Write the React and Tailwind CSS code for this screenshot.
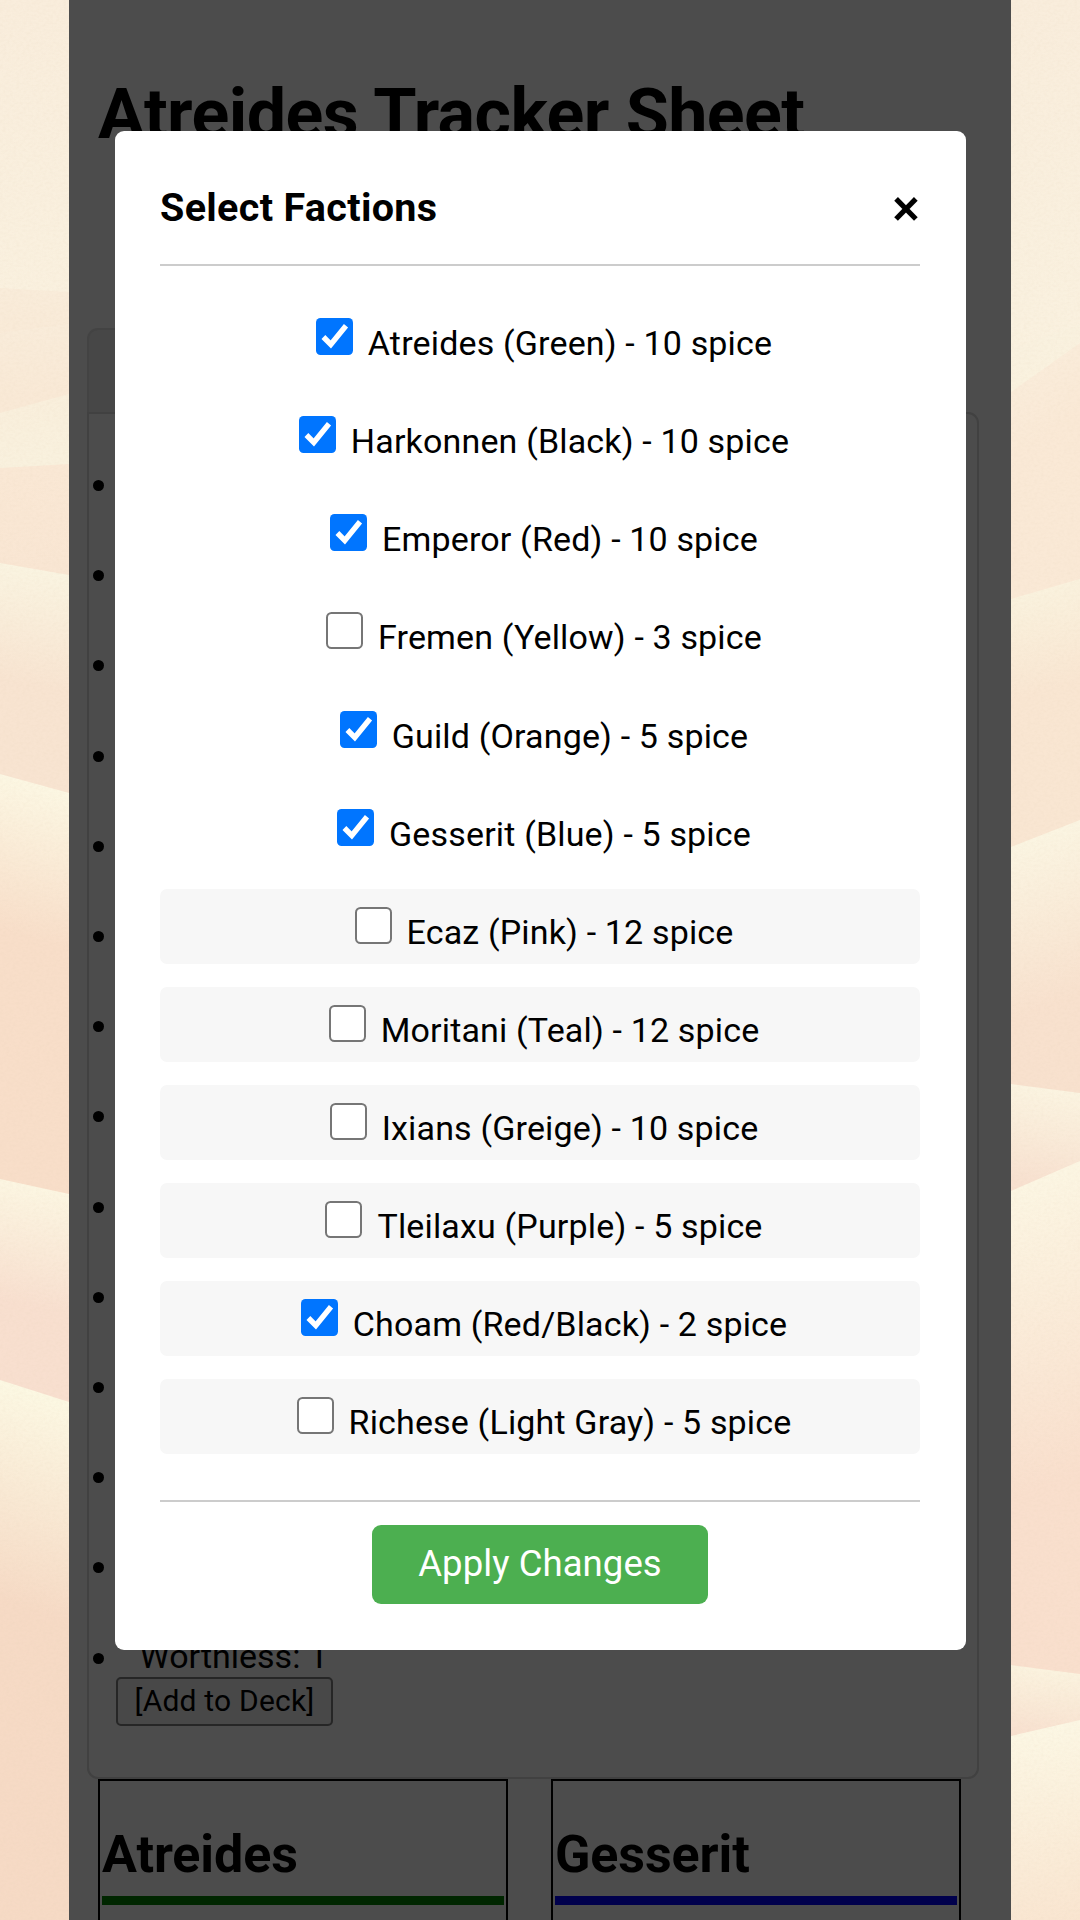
const factions = [
  { label: "Atreides (Green) - 10 spice", checked: true },
  { label: "Harkonnen (Black) - 10 spice", checked: true },
  { label: "Emperor (Red) - 10 spice", checked: true },
  { label: "Fremen (Yellow) - 3 spice" },
  { label: "Guild (Orange) - 5 spice", checked: true },
  { label: "Gesserit (Blue) - 5 spice", checked: true },
  { label: "Ecaz (Pink) - 12 spice", expansion: true },
  { label: "Moritani (Teal) - 12 spice", expansion: true },
  { label: "Ixians (Greige) - 10 spice", expansion: true },
  { label: "Tleilaxu (Purple) - 5 spice", expansion: true },
  { label: "Choam (Red/Black) - 2 spice", checked: true, expansion: true },
  { label: "Richese (Light Gray) - 5 spice", expansion: true },
];

// Each dune: ridge height at its left and right edge, end of the fade, crest and foot colours.
const leftDunes = [
  [288, 292, 345, "#f9ecda", "#f9ead7"],
  [333, 324, 390, "#faebd9", "#f9e9d6"],
  [333, 324, 400, "#f9ecda", "#f9e9d6"],
  [413, 394, 470, "#f9efdc", "#f9f1de"],
  [468, 464, 575, "#fae8d5", "#f9e6d3"],
  [563, 575, 680, "#faf4e1", "#f8e4d1"],
  [774, 793, 930, "#fcf7e3", "#f8dec9"],
  [1179, 1194, 1300, "#fcf6e2", "#f8dfcf"],
  [1380, 1402, 1600, "#fcf8e3", "#f6dac5"],
];
const rightDunes = [
  [349, 324, 390, "#f9f1df", "#faf2df"],
  [392, 343, 460, "#faecda", "#fae9d6"],
  [599, 579, 700, "#faf2de", "#f9e6d2"],
  [847, 820, 1020, "#fbf5e2", "#f8e1ce"],
  [1084, 1093, 1180, "#fbf4e1", "#f8e1d0"],
  [1191, 1161, 1500, "#fcf6e3", "#f9dfcd"],
  [1665, 1674, 1735, "#fbf3df", "#f8e0cf"],
  [1736, 1720, 1960, "#fcf7e4", "#f9e3ce"],
];

function Dunes({ id, dunes }) {
  return (
    <svg className="h-[1920px] w-[69px] shrink-0" viewBox="0 0 69 1920" preserveAspectRatio="none">
      <defs>
        <linearGradient id={id + "sky"} x1="0" y1="0" x2="0" y2="1">
          <stop offset="0" stopColor="#f9eddc" />
          <stop offset="1" stopColor="#faf2e0" />
        </linearGradient>
        {dunes.map((d, i) => (
          <linearGradient key={i} id={id + i} gradientUnits="userSpaceOnUse" x1="0" y1={d[0]} x2="0" y2={d[2]}>
            <stop offset="0" stopColor={d[3]} />
            <stop offset="1" stopColor={d[4]} />
          </linearGradient>
        ))}
        <filter id={id + "sand"} x="0" y="0" width="1" height="1">
          <feTurbulence type="fractalNoise" baseFrequency="0.3 0.4" numOctaves="2" />
          <feColorMatrix values="0 0 0 0 0.72  0 0 0 0 0.58  0 0 0 0 0.42  0.5 0.3 0 0 -0.32" />
        </filter>
      </defs>
      <rect width="69" height="400" fill={`url(#${id}sky)`} />
      {dunes.map((d, i) => (
        <rect key={i} y={d[0]} width="69" height="1920" fill={`url(#${id}${i})`} transform={`matrix(1 ${(d[1] - d[0]) / 69} 0 1 0 0)`} />
      ))}
      <rect width="69" height="1920" filter={`url(#${id}sand)`} opacity="0.35" />
    </svg>
  );
}

function Checkbox({ checked }) {
  return (
    <svg className="mt-[18px] h-[37px] w-[37px] shrink-0" viewBox="0 0 37 37">
      {checked ? (
        <>
          <rect width="37" height="37" rx="4.5" fill="#0075ff" />
          <path d="M7.4 19 14.8 26.4 30 7.8" fill="none" stroke="#fff" strokeWidth="5.4" />
        </>
      ) : (
        <rect x="1" y="1" width="35" height="35" rx="4.5" fill="#fff" stroke="#767676" strokeWidth="2" />
      )}
    </svg>
  );
}

function FactionRow({ label, checked, expansion }) {
  return (
    <label className={"flex h-[75px] items-start justify-center rounded-[7px] pl-[8px] " + (expansion ? "bg-[#f7f7f7]" : "")}>
      <Checkbox checked={checked} />
      <span className="ml-[15px] mt-[23px] text-[34px] leading-[40px] tracking-[0.16px] whitespace-nowrap">{label}</span>
    </label>
  );
}

function FactionCard({ name, bar }) {
  return (
    <section className="h-[300px] w-[410px] border-2 border-black px-[2px] pt-[43px]">
      <h2 className="text-[52px] leading-[61px] font-bold tracking-[-0.1px]">{name}</h2>
      <div className={"mt-[11px] h-[9px] " + bar} />
    </section>
  );
}

export default function App() {
  return (
    <div className="relative flex h-[1920px] w-[1080px] overflow-hidden font-['Roboto',sans-serif] text-black">
      <Dunes id="l" dunes={leftDunes} />

      <main className="h-[1920px] w-[942px] shrink-0 bg-[#4c4c4c]">
        <h1 className="ml-[29px] mt-[73px] h-[255px] text-[70px] leading-[82px] font-bold tracking-[-0.56px] whitespace-nowrap">
          Atreides Tracker Sheet
        </h1>
        <div className="ml-[18px] h-[84px] w-[300px] rounded-t-[11px] border-2 border-b-0 border-[#434343] bg-[#474747]" />
        <div className="ml-[18px] h-[1367px] w-[892px] rounded-[11px] rounded-tl-none border-2 border-[#414141]">
          <ul className="pt-[26.5px]">
            {Array.from({ length: 14 }, (_, i) => (
              <li key={i} className={"flex h-[90.2px] items-center pl-[3.5px] " + (i === 13 ? "text-[34px]" : "")}>
                <span className="h-[11px] w-[11px] rounded-full bg-black" />
                {i === 13 && <span className="-mt-[4px] ml-[36px] leading-[40px]">Worthless: 1</span>}
              </li>
            ))}
          </ul>
          <button className="-mt-[26px] ml-[27px] block h-[49px] w-[217px] rounded-[5px] border-2 border-[#262626] bg-[#484848] pb-[2px] text-[30px] leading-[43px] tracking-[0.2px]">
            [Add to Deck]
          </button>
        </div>
        <div className="ml-[29px] flex gap-[43px]">
          <FactionCard name="Atreides" bar="bg-[#002600]" />
          <FactionCard name="Gesserit" bar="bg-[#00004c]" />
        </div>
      </main>

      <Dunes id="r" dunes={rightDunes} />

      <div role="dialog" className="absolute top-[131px] left-[115px] h-[1519px] w-[851px] rounded-[9px] bg-white pt-[44px] pr-[46px] pl-[45px]">
        <header className="flex h-[91px] items-start justify-between border-b-2 border-[#ccc]">
          <h3 className="mt-[9px] text-[39.5px] leading-[47px] font-bold tracking-[0.33px]">Select Factions</h3>
          <button className="mt-[5px] text-[52px] leading-[58px] font-medium">×</button>
        </header>
        <div className="mt-[34px] flex flex-col gap-[23.13px]">
          {factions.map((f) => (
            <FactionRow key={f.label} {...f} />
          ))}
        </div>
        <footer className="mt-[46px] flex justify-center border-t-2 border-[#ccc] pt-[23px]">
          <button className="h-[79px] w-[336px] rounded-[9px] bg-[#4caf50] pb-[2px] text-[36.5px] tracking-[0.08px] text-white">Apply Changes</button>
        </footer>
      </div>
    </div>
  );
}
